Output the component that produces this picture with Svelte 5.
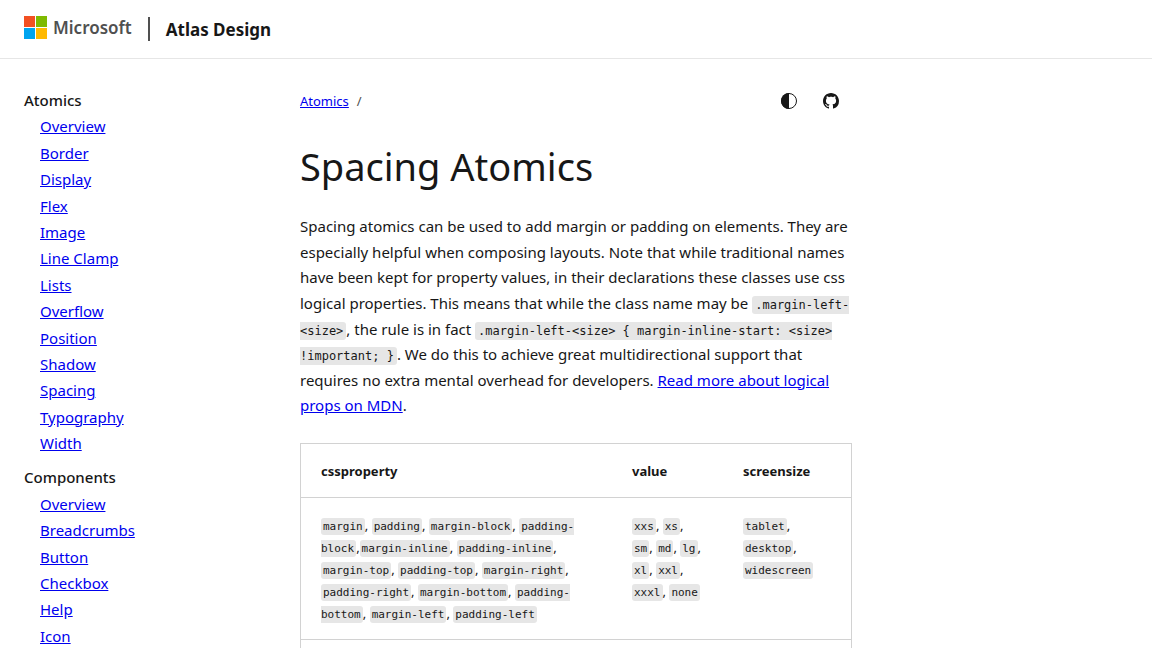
<script>
  const groups = [
    {
      title: 'Atomics',
      items: ['Overview', 'Border', 'Display', 'Flex', 'Image', 'Line Clamp', 'Lists', 'Overflow', 'Position', 'Shadow', 'Spacing', 'Typography', 'Width']
    },
    {
      title: 'Components',
      items: ['Overview', 'Breadcrumbs', 'Button', 'Checkbox', 'Help', 'Icon']
    }
  ];
  const values = ['xxs', 'xs', 'sm', 'md', 'lg', 'xl', 'xxl', 'xxxl', 'none'];
  const screens = ['tablet', 'desktop', 'widescreen'];
  const beforeInline = ['margin', 'padding', 'margin-block', 'padding-block'];
  const fromInline = ['margin-inline', 'padding-inline', 'margin-top', 'padding-top', 'margin-right', 'padding-right', 'margin-bottom', 'padding-bottom', 'margin-left', 'padding-left'];
</script>

{#snippet codes(list)}{#each list as name, i}{#if i > 0}{', '}{/if}<code>{name}</code>{/each}{/snippet}

<div class="page">
  <header>
    <a class="brand" href="#microsoft">
      <svg width="23" height="23" viewBox="0 0 23 23" aria-hidden="true">
        <path fill="#f25022" d="M0 0h11v11H0z" />
        <path fill="#7fba00" d="M12 0h11v11H12z" />
        <path fill="#00a4ef" d="M0 12h11v11H0z" />
        <path fill="#ffb900" d="M12 12h11v11H12z" />
      </svg>
      <span>Microsoft</span>
    </a>
    <span class="divider"></span>
    <a class="site" href="#home">Atlas Design</a>
  </header>

  <div class="layout">
    <nav class="sidebar" aria-label="Documentation">
      {#each groups as group}
        <section>
          <h2>{group.title}</h2>
          <ul>
            {#each group.items as item}
              <li><a href="#{item}">{item}</a></li>
            {/each}
          </ul>
        </section>
      {/each}
    </nav>

    <main>
      <div class="topbar">
        <nav class="crumbs" aria-label="Breadcrumb"><a href="#atomics">Atomics</a><span>/</span></nav>
        <div class="actions">
          <button type="button" aria-label="Theme">
            <svg width="16" height="16" viewBox="0 0 16 16" aria-hidden="true">
              <circle cx="8" cy="8" r="7.5" fill="none" stroke="currentColor" />
              <path fill="currentColor" d="M8 0a8 8 0 0 0 0 16z" />
            </svg>
          </button>
          <a href="#github" aria-label="GitHub">
            <svg width="16" height="16" viewBox="0 0 16 16" aria-hidden="true">
              <path fill="currentColor" d="M8 0C3.58 0 0 3.58 0 8c0 3.54 2.29 6.53 5.47 7.59.4.07.55-.17.55-.38 0-.19-.01-.82-.01-1.49-2.01.37-2.53-.49-2.69-.94-.09-.23-.48-.94-.82-1.13-.28-.15-.68-.52-.01-.53.63-.01 1.08.58 1.23.82.72 1.21 1.87.87 2.33.66.07-.52.28-.87.51-1.07-1.78-.2-3.64-.89-3.64-3.95 0-.87.31-1.59.82-2.15-.08-.2-.36-1.02.08-2.12 0 0 .67-.21 2.2.82.64-.18 1.32-.27 2-.27s1.36.09 2 .27c1.53-1.04 2.2-.82 2.2-.82.44 1.1.16 1.92.08 2.12.51.56.82 1.27.82 2.15 0 3.07-1.87 3.75-3.65 3.95.29.25.54.73.54 1.48 0 1.07-.01 1.93-.01 2.2 0 .21.15.46.55.38A8.01 8.01 0 0 0 16 8c0-4.42-3.58-8-8-8z" />
            </svg>
          </a>
        </div>
      </div>

      <h1>Spacing Atomics</h1>

      <p>
        Spacing atomics can be used to add margin or padding on elements. They are especially helpful when
        composing layouts. Note that while traditional names have been kept for property values, in their
        declarations these classes use css logical properties. This means that while the class name may be
        <code>.margin-left-&lt;size&gt;</code>, the rule is in fact
        <code>{'.margin-left-<size> { margin-inline-start: <size> !important; }'}</code>. We do this to achieve
        great multidirectional support that requires no extra mental overhead for developers.
        <a href="#mdn">Read more about logical props on MDN</a>.
      </p>

      <table>
        <thead>
          <tr><th class="properties">cssproperty</th><th class="values">value</th><th>screensize</th></tr>
        </thead>
        <tbody>
          <tr>
            <td>{@render codes(beforeInline)},{@render codes(fromInline)}</td>
            <td>{@render codes(values)}</td>
            <td>{@render codes(screens)}</td>
          </tr>
          <tr class="next"><td></td><td></td><td></td></tr>
        </tbody>
      </table>
    </main>
  </div>
</div>

<style>
  :global(body) {
    margin: 0;
    background: #fff;
  }
  .page {
    height: 100vh;
    overflow: hidden;
    color: #171717;
    font: 15px/1.71 'Segoe UI', 'Noto Sans', sans-serif;
  }
  header {
    display: flex;
    align-items: center;
    height: 58px;
    padding: 0 24px;
    border-bottom: 1px solid #e6e6e6;
  }
  header a {
    text-decoration: none;
  }
  .brand {
    display: flex;
    align-items: center;
    gap: 6px;
    padding-bottom: 3px;
    color: #505050;
    font-size: 17px;
    font-weight: 600;
    line-height: 24px;
  }
  .divider {
    width: 2px;
    height: 24px;
    margin: 0 16px;
    background: #505050;
  }
  .site {
    padding-top: 2px;
    color: #171717;
    font-size: 17px;
    font-weight: 700;
  }
  .layout {
    display: grid;
    grid-template-columns: minmax(0, 1fr) minmax(0, 2fr) minmax(0, 1fr);
    padding: 0 24px;
  }
  a {
    color: #0000ee;
  }
  .sidebar {
    padding-top: 28px;
    line-height: 1.76;
  }
  section {
    margin-bottom: 8px;
  }
  h2 {
    margin: 0;
    font-size: 15px;
    font-weight: 500;
  }
  ul {
    margin: 0;
    padding: 0 0 0 16px;
    list-style: none;
  }
  .topbar {
    display: flex;
    justify-content: space-between;
    align-items: center;
    margin-top: 24px;
    height: 36px;
  }
  .crumbs {
    display: flex;
    gap: 8px;
    font-size: 13px;
  }
  .crumbs span {
    color: #505050;
  }
  .actions {
    display: flex;
    gap: 26px;
    padding-right: 13px;
  }
  .actions button,
  .actions a {
    display: flex;
    padding: 0;
    border: 0;
    background: none;
    color: #171717;
  }
  h1 {
    margin: 20px 0 0;
    font-size: 38px;
    font-weight: 400;
    line-height: 54px;
  }
  p {
    margin: 21px 0 24px;
  }
  code {
    padding: 2px 3px;
    border-radius: 3px;
    background: #e6e6e6;
    font-family: Consolas, 'DejaVu Sans Mono', monospace;
    font-size: 12px;
    line-height: 1;
  }
  table {
    width: 100%;
    border: 1px solid #d2d2d2;
    border-spacing: 0;
    table-layout: fixed;
    font-size: 13px;
    line-height: 22px;
  }
  th,
  td {
    padding: 16px 20px 15px;
    border-bottom: 1px solid #d2d2d2;
    text-align: left;
    vertical-align: top;
  }
  th {
    font-weight: 700;
  }
  .properties {
    width: 271px;
  }
  .values {
    width: 71px;
  }
  td code {
    padding: 2px;
    font-size: 11px;
  }
  .next td {
    height: 110px;
  }
</style>
